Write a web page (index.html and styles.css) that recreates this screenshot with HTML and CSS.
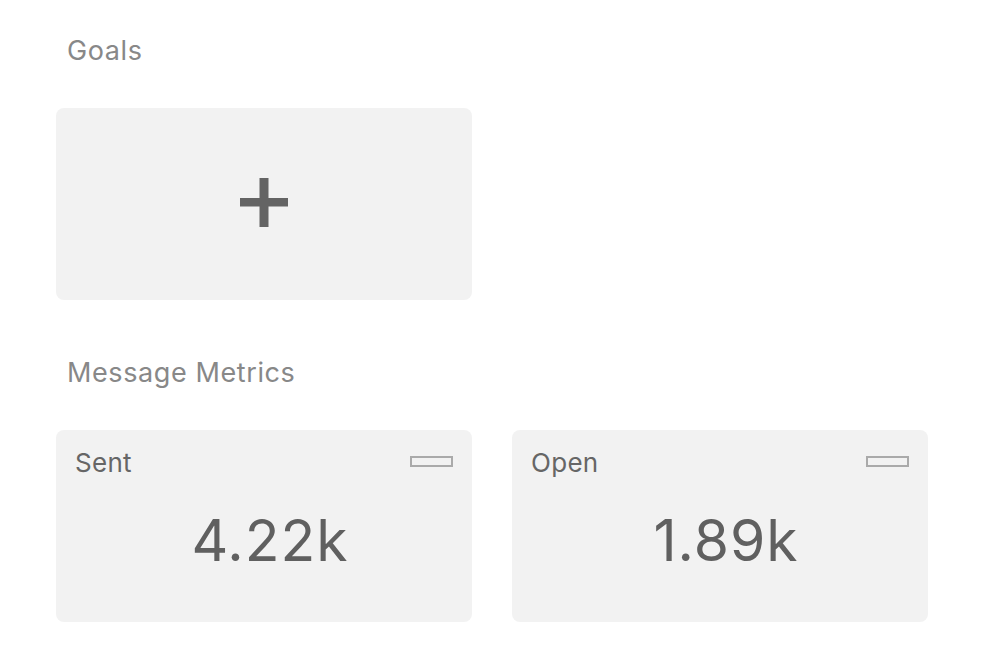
FILE: index.html
```
<!DOCTYPE html>
<html>
<head>
<meta charset="utf-8">
<link rel="stylesheet" href="styles.css">
</head>
<body>
<div class="page">
  <section class="section">
    <h2 class="heading heading-goals">Goals</h2>
    <div class="grid">
      <div class="card card-add">
        <svg class="plus" width="48" height="49" viewBox="0 0 48 49">
          <rect x="19.5" y="0" width="9" height="49" fill="#646464"/>
          <rect x="0" y="20" width="48" height="8.5" fill="#646464"/>
        </svg>
      </div>
    </div>
  </section>
  <section class="section">
    <h2 class="heading heading-metrics">Message Metrics</h2>
    <div class="grid">
      <div class="card card-metric">
        <div class="metric-top">
          <span class="metric-label">Sent</span>
          <span class="metric-toggle"></span>
        </div>
        <div class="metric-value">4.22k</div>
      </div>
      <div class="card card-metric">
        <div class="metric-top">
          <span class="metric-label">Open</span>
          <span class="metric-toggle"></span>
        </div>
        <div class="metric-value">1.89k</div>
      </div>
    </div>
  </section>
</div>
</body>
</html>
```
FILE: styles.css
```
html, body {
  margin: 0;
  padding: 0;
  background: #ffffff;
}
body {
  font-family: Inter, "Liberation Sans", sans-serif;
}
.page {
  padding: 0 0 0 56px;
  width: 872px;
}
.heading {
  margin: 0;
  font-weight: 400;
  color: #888888;
  font-size: 27px;
  line-height: 32px;
  letter-spacing: 0.6px;
  padding-left: 11px;
  box-sizing: border-box;
}
.heading-goals {
  padding-top: 35px;
  height: 108px;
}
.heading-metrics {
  padding-top: 57px;
  height: 130px;
}
.grid {
  display: grid;
  grid-template-columns: 416px 416px;
  column-gap: 40px;
}
.card {
  background: #f2f2f2;
  border-radius: 8px;
  height: 192px;
  box-sizing: border-box;
}
.card-add {
  display: flex;
  align-items: center;
  justify-content: center;
}
.plus {
  display: block;
  margin-top: -3px;
}
.card-metric {
  padding: 18px 19px 0 19px;
  display: flex;
  flex-direction: column;
}
.metric-top {
  display: flex;
  justify-content: space-between;
  align-items: flex-start;
}
.metric-label {
  font-size: 26px;
  line-height: 30px;
  letter-spacing: 0.3px;
  color: #666666;
}
.metric-toggle {
  display: block;
  width: 43px;
  height: 11px;
  box-sizing: border-box;
  border: 2px solid #aaaaaa;
  margin-top: 8px;
}
.metric-value {
  text-align: center;
  font-size: 57px;
  line-height: 64px;
  letter-spacing: 1px;
  color: #606060;
  margin-top: 31px;
  padding-left: 12px;
}
```
